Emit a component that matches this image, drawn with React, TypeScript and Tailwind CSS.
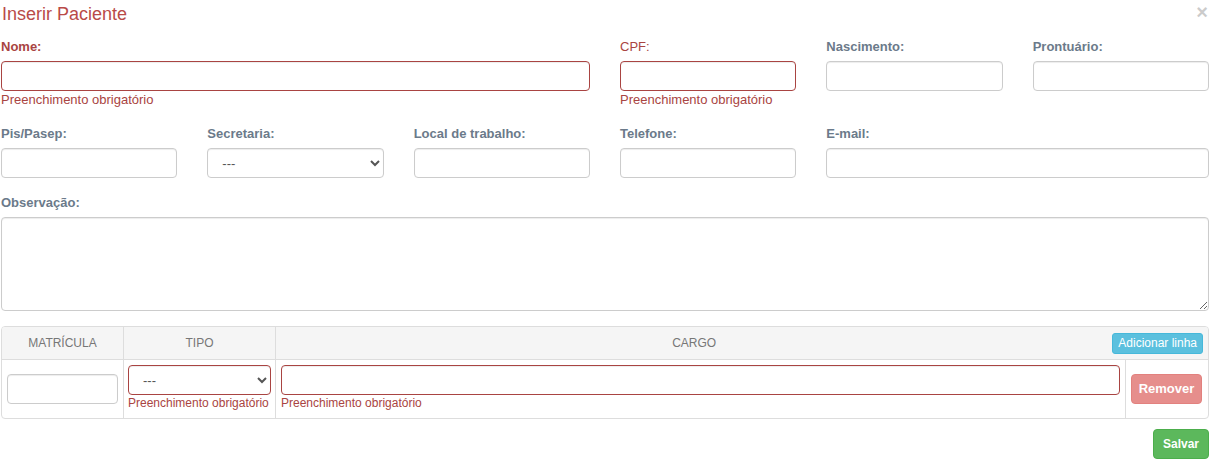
const inputBase =
  "block w-full h-[30px] rounded-[4px] border bg-white px-3 text-[13px] text-[#555] outline-none shadow-[inset_0_1px_1px_rgba(0,0,0,0.075)]";
const okBorder = "border-[#ccc]";
const errBorder = "border-[#a94442]";

function Field({
  label,
  error,
  thin,
  span,
  children,
}: {
  label: string;
  error?: boolean;
  thin?: boolean;
  span?: string;
  children: React.ReactNode;
}) {
  return (
    <div className={span}>
      <label
        className={`block h-[15px] leading-[15px] mb-[7px] text-[13px] ${thin ? "font-normal" : "font-bold"} ${
          error ? "text-[#a94442]" : "text-[#6b7a8a]"
        }`}
      >
        {label}
      </label>
      {children}
      {error && (
        <p className="mt-[2px] h-[14px] leading-[14px] text-[13px] text-[#a94442]">
          Preenchimento obrigatório
        </p>
      )}
    </div>
  );
}

export default function App() {
  return (
    <div className="w-[1216px] h-[468px] bg-white font-['Liberation_Sans',Arial,sans-serif] relative">
      <button className="absolute right-[8px] top-[2px] text-[20px] font-bold leading-[20px] text-black opacity-20">
        ×
      </button>
      <div className="ml-[1px] w-[1208px] pt-[4px]">
        <h4 className="h-[20px] leading-[20px] text-[18px] text-[#b94a48] pl-[1px]">
          Inserir Paciente
        </h4>

        <div className="mt-[15px] grid grid-cols-6 gap-x-[30px]">
          <Field label="Nome:" error span="col-span-3">
            <input className={`${inputBase} ${errBorder}`} />
          </Field>
          <Field label="CPF:" error thin>
            <input className={`${inputBase} ${errBorder}`} />
          </Field>
          <Field label="Nascimento:">
            <input className={`${inputBase} ${okBorder}`} />
          </Field>
          <Field label="Prontuário:">
            <input className={`${inputBase} ${okBorder}`} />
          </Field>
        </div>

        <div className="mt-[19px] grid grid-cols-6 gap-x-[30px]">
          <Field label="Pis/Pasep:">
            <input className={`${inputBase} ${okBorder}`} />
          </Field>
          <Field label="Secretaria:">
            <select className={`${inputBase} ${okBorder} px-[10px]`}>
              <option>---</option>
            </select>
          </Field>
          <Field label="Local de trabalho:">
            <input className={`${inputBase} ${okBorder}`} />
          </Field>
          <Field label="Telefone:">
            <input className={`${inputBase} ${okBorder}`} />
          </Field>
          <Field label="E-mail:" span="col-span-2">
            <input className={`${inputBase} ${okBorder}`} />
          </Field>
        </div>

        <div className="mt-[17px]">
          <Field label="Observação:">
            <textarea
              className={`${inputBase} ${okBorder} h-[94px] py-[6px]`}
            />
          </Field>
        </div>

        <div className="mt-[15px] rounded-[4px] border border-[#ddd] overflow-hidden">
          <div className="grid grid-cols-[122px_152px_1fr] h-[33px] bg-[#f5f5f5] border-b border-[#ddd] text-[12px] text-[#777]">
            <div className="flex items-center justify-center border-r border-[#ddd]">MATRÍCULA</div>
            <div className="flex items-center justify-center border-r border-[#ddd]">TIPO</div>
            <div className="flex items-center pr-[5px]">
              <span className="flex-1 text-center">CARGO</span>
              <button className="h-[21px] px-[5px] rounded-[3px] bg-[#5bc0de] border border-[#46b8da] text-white text-[12px] leading-[19px]">
                Adicionar linha
              </button>
            </div>
          </div>
          <div className="grid grid-cols-[122px_152px_1fr_82px] h-[58px]">
            <div className="flex items-center px-[5px] border-r border-[#ddd]">
              <input className={`${inputBase} ${okBorder}`} />
            </div>
            <div className="px-[4px] pt-[5px] border-r border-[#ddd]">
              <select className={`${inputBase} ${errBorder} px-[10px]`}>
                <option>---</option>
              </select>
              <p className="mt-[1px] leading-[14px] text-[12px] text-[#a94442] whitespace-nowrap">
                Preenchimento obrigatório
              </p>
            </div>
            <div className="px-[5px] pt-[5px] border-r border-[#ddd]">
              <input className={`${inputBase} ${errBorder}`} />
              <p className="mt-[1px] leading-[14px] text-[12px] text-[#a94442]">
                Preenchimento obrigatório
              </p>
            </div>
            <div className="flex items-center pl-[5px] pr-[5px]">
              <button className="w-[71px] h-[30px] rounded-[4px] bg-[#d9534f] border border-[#d43f3a] opacity-65 text-white text-[13px] font-bold">
                Remover
              </button>
            </div>
          </div>
        </div>

        <div className="mt-[10px] flex justify-end">
          <button className="w-[56px] h-[30px] rounded-[4px] bg-[#5cb85c] border border-[#4cae4c] text-white text-[12px] font-bold">
            Salvar
          </button>
        </div>
      </div>
    </div>
  );
}
